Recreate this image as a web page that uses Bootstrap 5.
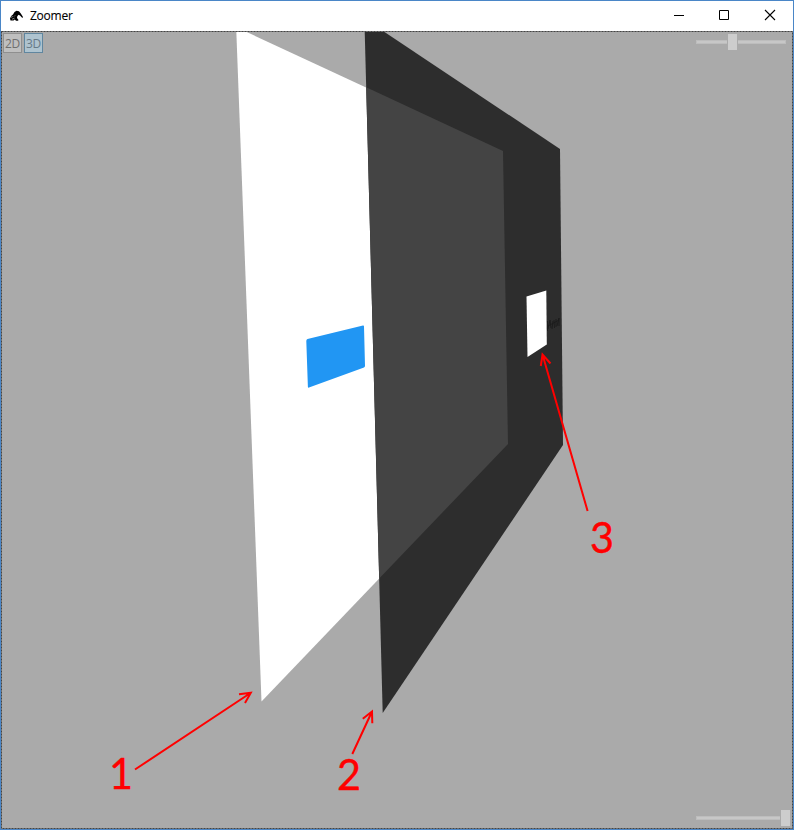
<!DOCTYPE html>
<html lang="en">
<head>
<meta charset="utf-8">
<title>Zoomer</title>
<link href="https://cdn.jsdelivr.net/npm/bootstrap@5.3.0/dist/css/bootstrap.min.css" rel="stylesheet">
<style>
  body { font-family: "Open Sans", "Noto Sans", sans-serif; }
  .app-window { width: 794px; height: 830px; border: 1px solid #4a86c7; }
  .title-strip { height: 30px; padding-left: 8px; }
  .title-name { font-size: 12px; line-height: 16px; color: #000; margin-left: 6px; letter-spacing: -.25px; -webkit-text-stroke: .1px #000; }
  .caption-btns { height: 30px; }
  .caption-btn { width: 46px; height: 30px; }
  .caption-btn:last-child { width: 44px; }
  .caption-btn svg { display: block; overflow: visible; }
  .viewport3d { background: #aaa; }
  .scene { left: 0; top: 0; }
  .overlay-tools { padding: 2px 7px 3px 2px; }
  .mode-group { gap: 2px; }
  .mode-btn { width: 19px; height: 20px; font-size: 12px; line-height: 19px; letter-spacing: -.3px; color: #6f6f6f; background: #bfbfbf; border: 1px solid #8f8f8f; border-radius: 0; }
  .mode-btn.active { color: #667a88; background: #aec3cf; border-color: #60869f; }
  .slide { display: block; width: 91px; height: 17px; overflow: visible; }
  .note { font-family: Lato, "Open Sans", sans-serif; font-size: 43px; fill: #f00; stroke: #f00; stroke-width: .4; }
</style>
</head>
<body class="m-0 overflow-hidden">
<div class="app-window d-flex flex-column bg-white">
  <header class="title-strip d-flex align-items-center justify-content-between flex-shrink-0">
    <div class="d-flex align-items-center">
      <svg width="15" height="12" viewBox="0 0 15 12"><path d="M1 8.500 2.200 6 4 4.500 5.500 2 7.500 .8 10 1.200 11.800 3.500 14 7 13.300 8 11 5.500 9.500 4.800 8.300 6.200 8 8 9.500 10 9 10.800H7L5.800 9.500 4.500 10.500H1.500Z"/><path d="M3 9.200 5.500 8.200M2 7.300 3.800 6.500M5 6.500 6 5.500" stroke="#ddd" stroke-width=".6"/></svg>
      <span class="title-name">Zoomer</span>
    </div>
    <div class="caption-btns d-flex">
      <span class="caption-btn"><svg width="46" height="29"><path d="M17 14.500H27" stroke="#000"/></svg></span>
      <span class="caption-btn"><svg width="46" height="29"><path d="M16.500 9.500h9v9h-9z" fill="none" stroke="#000"/></svg></span>
      <span class="caption-btn"><svg width="44" height="29"><path d="M16 9 26 19M26 9 16 19" stroke="#000" stroke-width="1.100"/></svg></span>
    </div>
  </header>
  <main class="viewport3d position-relative flex-grow-1">
    <svg class="scene position-absolute" width="792" height="798" viewBox="1 31 792 798">
      <polygon points="236.300,31 244.500,31 503,151 508,444 261.500,701.500" fill="#fff"/>
      <polygon points="364.700,31 383,31 560,149 563,445 382.700,713" fill="#2d2d2d"/>
      <polygon points="366.200,87.300 503,151 508,444 379.200,578.500" fill="#444"/>
      <path d="M307.500 339 363 325.600Q364 325.400 364 326.500L365 366 Q365 367 364 367.400L309 387.600Q308 388 307.900 387L306.300 341Q306.300 339.500 307.500 339Z" fill="#2196f3"/>
      <polygon points="526.500,296.500 546.300,290.500 546.800,344.500 527.500,357" fill="#fff"/>
      <path d="M547.500 321V331M548 329 550 320 551 328M552 329 553 321M554 320 554.500 328M556 319V327M557 326 559 318V326M548 326 559 320" fill="none" stroke="#1b1b1b" stroke-width=".9"/>
      <g fill="none" stroke="#f00" stroke-width="2">
        <path d="M135 769.500 250.500 693M239 694.300 250.800 692.700 245 703"/>
        <path d="M352.300 754 372 711.500M362.800 718.800 372 711.500 372.300 723.300"/>
        <path d="M587.600 511 542.500 354.500M540.800 366 542.500 354.500 550.500 363.500"/>
      </g>
      <g class="note">
        <text x="109" y="789" textLength="24" lengthAdjust="spacingAndGlyphs">1</text>
        <text x="337" y="790" textLength="24" lengthAdjust="spacingAndGlyphs">2</text>
        <text x="590" y="553" textLength="24" lengthAdjust="spacingAndGlyphs">3</text>
      </g>
      <rect x="1.500" y="31.500" width="791" height="797" fill="none" stroke="#999"/>
      <rect x="1.500" y="31.500" width="791" height="797" fill="none" stroke="#444" stroke-dasharray="2 1"/>
    </svg>
    <div class="overlay-tools position-relative d-flex flex-column justify-content-between h-100">
      <div class="d-flex justify-content-between">
        <div class="mode-group d-flex">
          <button class="mode-btn btn p-0" type="button">2D</button>
          <button class="mode-btn btn p-0 active" type="button">3D</button>
        </div>
        <svg class="slide" viewBox="695 33 91 17"><path d="M696 42H727M738 42H786" stroke="#bdbdbd" stroke-width="4"/><path d="M697 42H727M738 42H785" stroke="#c7c7c7" stroke-width="2"/><path d="M728 34h9v16h-9z" fill="#cdcdcd"/></svg>
      </div>
      <div class="d-flex justify-content-end">
        <svg class="slide" viewBox="695 809 91 17"><path d="M696 818H780" stroke="#bdbdbd" stroke-width="4"/><path d="M697 818H780" stroke="#c7c7c7" stroke-width="2"/><path d="M781 810h9v16h-9z" fill="#cdcdcd"/></svg>
      </div>
    </div>
  </main>
</div>
<script src="https://cdn.jsdelivr.net/npm/bootstrap@5.3.0/dist/js/bootstrap.bundle.min.js"></script>
</body>
</html>
